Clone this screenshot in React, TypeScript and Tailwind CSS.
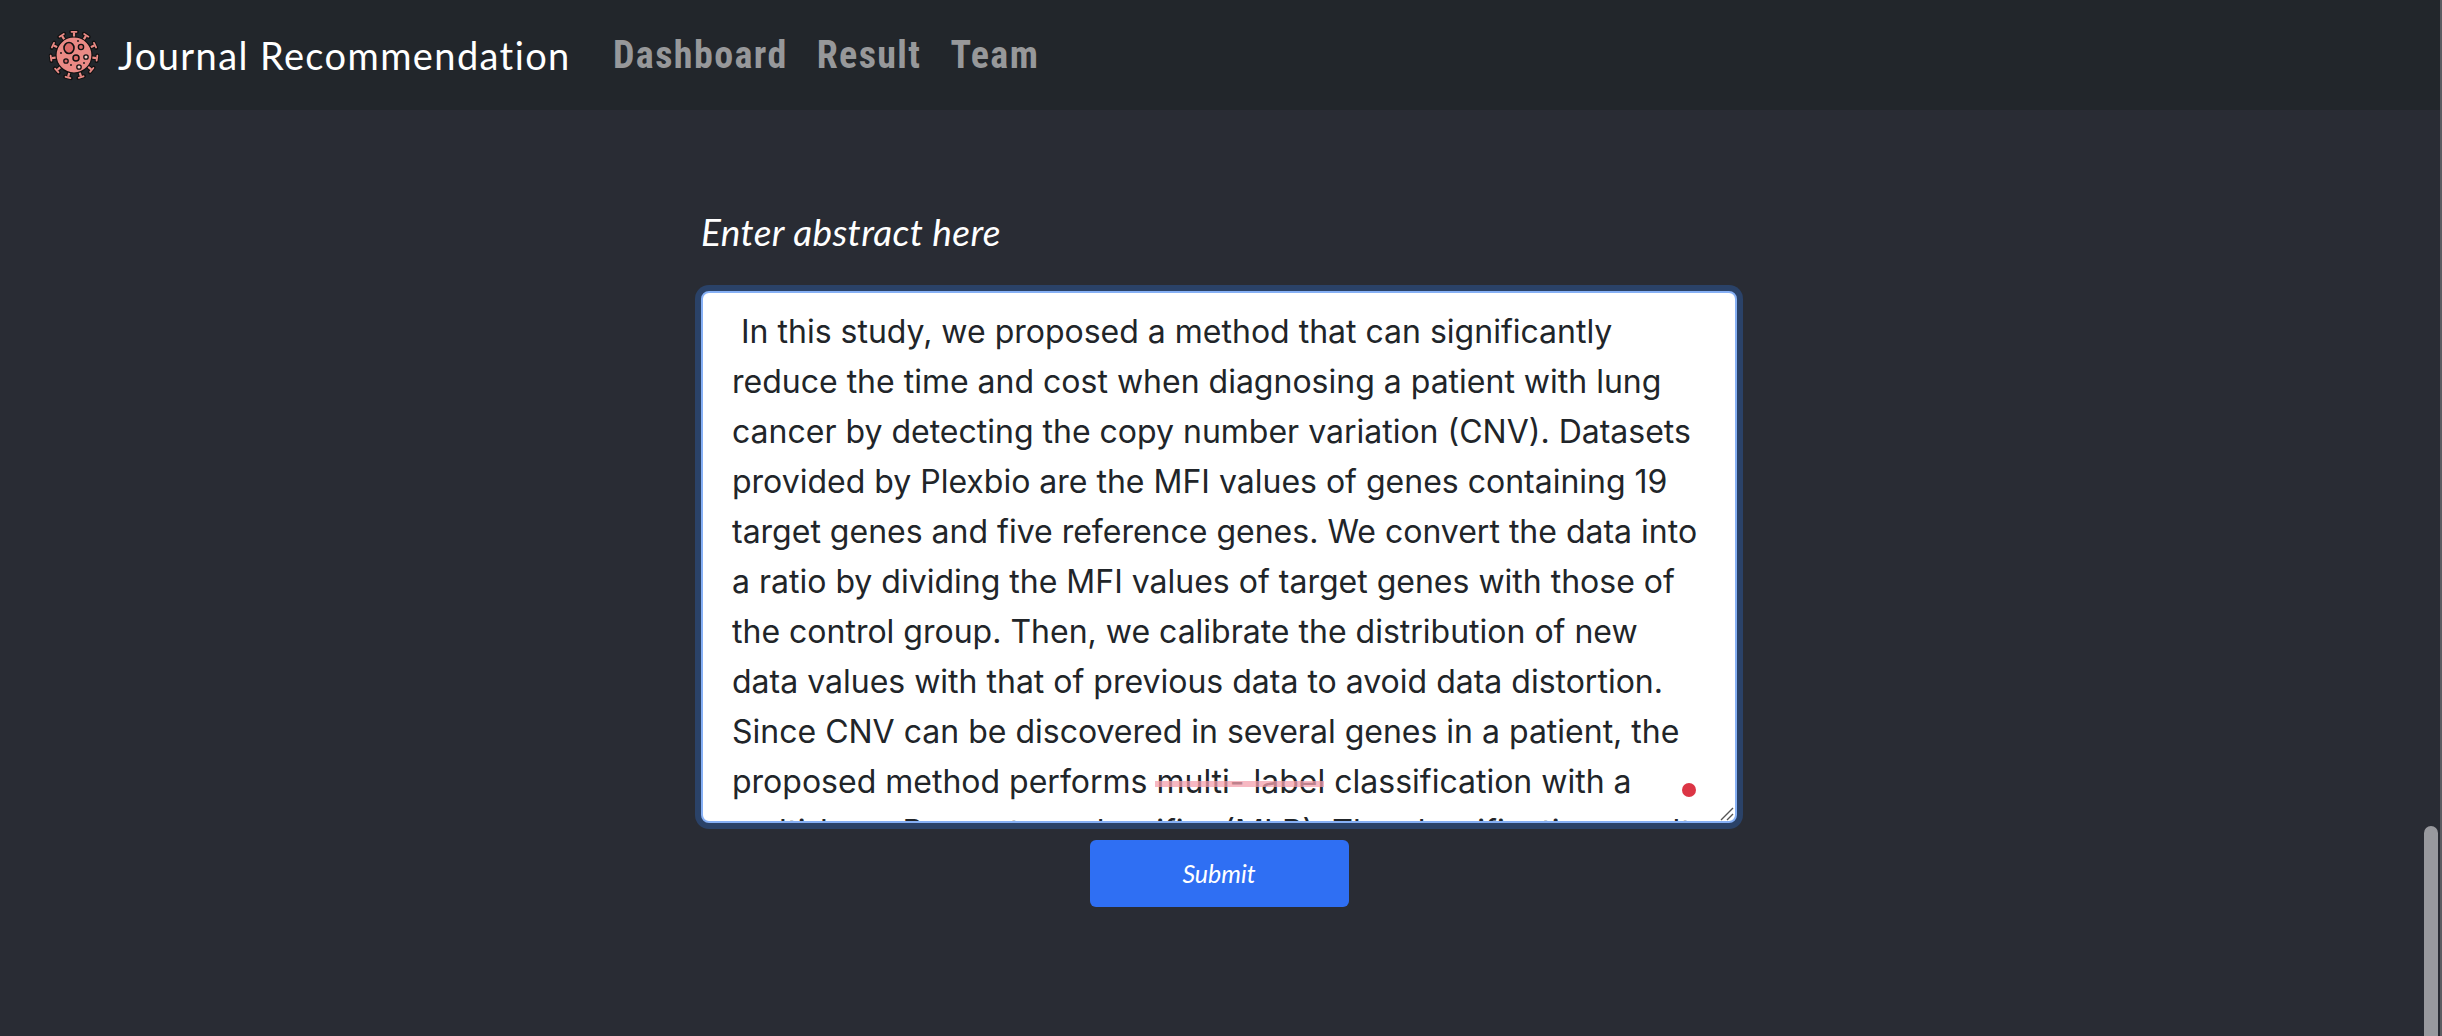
const abstract = ` In this study, we proposed a method that can significantly
reduce the time and cost when diagnosing a patient with lung
cancer by detecting the copy number variation (CNV). Datasets
provided by Plexbio are the MFI values of genes containing 19
target genes and five reference genes. We convert the data into
a ratio by dividing the MFI values of target genes with those of
the control group. Then, we calibrate the distribution of new
data values with that of previous data to avoid data distortion.
Since CNV can be discovered in several genes in a patient, the
proposed method performs multi- label classification with a
multi-layer Perceptron classifier (MLP). The classification result`;

function VirusLogo() {
  const angles = [0, 32, 65, 98, 130, 162, 195, 228, 262, 295, 328];
  return (
    <svg width="52" height="52" viewBox="0 0 52 52" className="shrink-0">
      {angles.map((a) => (
        <g key={a} transform={`rotate(${a} 26 26)`}>
          <line x1="26" y1="9" x2="26" y2="3.5" stroke="#111" strokeWidth="4.4" />
          <line x1="23" y1="2.8" x2="29" y2="2.8" stroke="#111" strokeWidth="3.8" strokeLinecap="round" />
          <line x1="26" y1="9" x2="26" y2="3.5" stroke="#ea8a85" strokeWidth="2.2" />
          <line x1="23.5" y1="2.8" x2="28.5" y2="2.8" stroke="#ea8a85" strokeWidth="1.8" strokeLinecap="round" />
        </g>
      ))}
      <circle cx="26" cy="26" r="18" fill="#ea8a85" stroke="#111" strokeWidth="1.2" />
      <ellipse cx="21" cy="19" rx="5" ry="5.5" fill="#d96a68" stroke="#111" strokeWidth="1.6" />
      <circle cx="33" cy="18" r="2.6" fill="#d96a68" stroke="#111" strokeWidth="1.4" />
      <circle cx="28" cy="29" r="3" fill="#d96a68" stroke="#111" strokeWidth="1.5" />
      <circle cx="38" cy="28" r="2.2" fill="#f6c7c2" stroke="#111" strokeWidth="1.3" />
      <circle cx="18" cy="32" r="2.2" fill="#d96a68" stroke="#111" strokeWidth="1.3" />
      <circle cx="31" cy="38" r="2.2" fill="#f6c7c2" stroke="#111" strokeWidth="1.3" />
      <circle cx="13" cy="24" r="0.9" fill="#111" />
      <circle cx="23" cy="36" r="0.9" fill="#111" />
      <circle cx="36" cy="34" r="0.9" fill="#111" />
      <circle cx="30" cy="12" r="0.9" fill="#111" />
    </svg>
  );
}

export default function App() {
  return (
    <div className="relative h-screen overflow-hidden bg-[#292c34] font-['Inter',sans-serif]">
      <nav className="flex h-[110px] items-center bg-[#22262b] pl-[48px]">
        <VirusLogo />
        <span className="ml-[18px] w-[495px] font-['Lato',sans-serif] text-[38px] leading-none tracking-[1.4px] text-white">
          Journal Recommendation
        </span>
        <div className="flex items-center gap-[29px] font-['Roboto',sans-serif] text-[38px] font-bold leading-none tracking-[1.4px] text-[#97989a] font-stretch-condensed">
          <span>Dashboard</span>
          <span>Result</span>
          <span>Team</span>
        </div>
      </nav>
      <main className="flex flex-col items-center pr-[4px]">
        <div className="w-[1036px]">
          <label className="mt-[97px] block font-['Lato',sans-serif] text-[37px] italic leading-[50px] tracking-[0.4px] text-white">
            Enter abstract here
          </label>
          <div className="relative mt-[34px]">
            <textarea
              readOnly
              wrap="off"
              defaultValue={abstract}
              className="block h-[532px] w-full resize-none overflow-hidden rounded-[8px] border-2 border-[#86b0f5] bg-white px-[29px] py-[14px] text-[32px] leading-[50px] text-[#212529] shadow-[0_0_0_6px_#2a4268] outline-none [scrollbar-width:none]"
            />
            <div className="absolute left-[454px] top-[490px] h-[6px] w-[169px] bg-[#f4a0ae]/75" />
            <div className="absolute left-[981px] top-[492px] h-[14px] w-[14px] rounded-full bg-[#dc3545]" />
            <svg width="14" height="14" viewBox="0 0 14 14" className="absolute left-[1019px] top-[516px]">
              <path d="M1 13 L13 1 M7 13 L13 7" stroke="#555" strokeWidth="1.4" fill="none" />
            </svg>
          </div>
          <div className="mt-[17px] flex justify-center">
            <button className="h-[67px] w-[259px] rounded-[6px] bg-[#2f6ff3] font-['Lato',sans-serif] text-[25px] italic text-white">
              Submit
            </button>
          </div>
        </div>
      </main>
      <div className="absolute bottom-0 right-0 top-0 w-[2px] bg-[#5a5c62]" />
      <div className="absolute bottom-0 right-[4px] top-[826px] w-[14px] rounded-t-full bg-[#98999e]" />
    </div>
  );
}
